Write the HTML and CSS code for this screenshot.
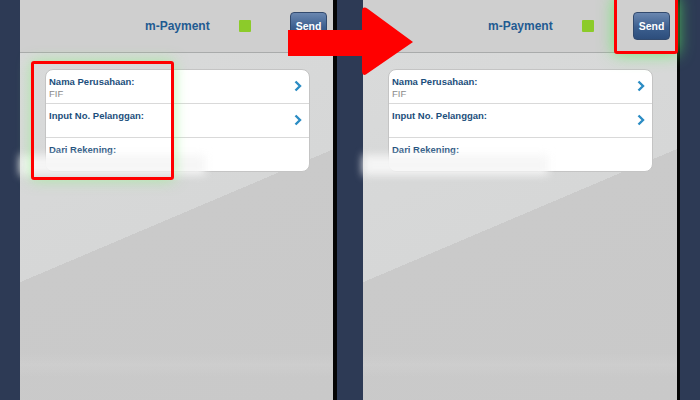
FILE: index.html
```html
<!DOCTYPE html>
<html lang="id">
<head>
    <meta charset="UTF-8">
    <meta name="viewport" content="width=device-width, initial-scale=1.0">
    <title>m-Payment</title>
    <link rel="stylesheet" href="styles.css">
</head>
<body>

    <div class="stage">
        <div class="screen">
            <div class="topbar">
                <span class="title">m-Payment</span>
                <span class="status"></span>
                <button class="send">Send</button>
            </div>
            <div class="content">
                <div class="card">
                    <div class="row">
                        <div class="row-text">
                            <span class="label">Nama Perusahaan:</span>
                            <span class="value">FIF</span>
                        </div>
                        <svg class="chevron" width="8" height="12" viewBox="0 0 8 12"><polyline points="1.5,1.5 6,6 1.5,10.5" fill="none" stroke="#2b8cc4" stroke-width="2.4"/></svg>
                    </div>
                    <div class="row">
                        <div class="row-text">
                            <span class="label">Input No. Pelanggan:</span>
                        </div>
                        <svg class="chevron" width="8" height="12" viewBox="0 0 8 12"><polyline points="1.5,1.5 6,6 1.5,10.5" fill="none" stroke="#2b8cc4" stroke-width="2.4"/></svg>
                    </div>
                    <div class="row row-last">
                        <div class="row-text">
                            <span class="label">Dari Rekening:</span>
                        </div>
                    </div>
                </div>
            </div>
            <div class="smudge"></div>
            <div class="mark mark-list"></div>
        </div>

        <div class="screen screen-right">
            <div class="topbar">
                <span class="title">m-Payment</span>
                <span class="status"></span>
                <button class="send">Send</button>
            </div>
            <div class="content">
                <div class="card">
                    <div class="row">
                        <div class="row-text">
                            <span class="label">Nama Perusahaan:</span>
                            <span class="value">FIF</span>
                        </div>
                        <svg class="chevron" width="8" height="12" viewBox="0 0 8 12"><polyline points="1.5,1.5 6,6 1.5,10.5" fill="none" stroke="#2b8cc4" stroke-width="2.4"/></svg>
                    </div>
                    <div class="row">
                        <div class="row-text">
                            <span class="label">Input No. Pelanggan:</span>
                        </div>
                        <svg class="chevron" width="8" height="12" viewBox="0 0 8 12"><polyline points="1.5,1.5 6,6 1.5,10.5" fill="none" stroke="#2b8cc4" stroke-width="2.4"/></svg>
                    </div>
                    <div class="row row-last">
                        <div class="row-text">
                            <span class="label">Dari Rekening:</span>
                        </div>
                    </div>
                </div>
            </div>
            <div class="smudge"></div>
            <div class="mark mark-send"></div>
        </div>

        <!-- panah penunjuk -->
        <svg class="arrow" width="126" height="80" viewBox="0 0 126 80">
            <path d="M0 30 H74 V12 Q74 5 80 9 L125 42 L80 73 Q74 78 74 70 V56 H0 Z" fill="#ff0000"/>
        </svg>
    </div>

</body>
</html>
```

FILE: styles.css
```css
body {
    margin: 0;
    padding: 0;
    background-color: #2d3a55;
    font-family: "Liberation Sans", Arial, sans-serif;
}

.stage {
    position: relative;
    width: 700px;
    height: 400px;
    display: flex;
    gap: 26px;
    padding-left: 20px;
    box-sizing: border-box;
    overflow: hidden;
}

.screen {
    position: relative;
    width: 313px;
    height: 400px;
    border-right: 4px solid #050505;
    display: flex;
    flex-direction: column;
}

.screen-right {
    width: 314px;
    border-right-width: 3px;
}

.topbar {
    height: 52px;
    background-color: #cfcfcf;
    border-bottom: 1px solid #a9abab;
    display: flex;
    align-items: center;
    padding-left: 125px;
}

.title {
    font-size: 12px;
    font-weight: bold;
    color: #1f5b92;
    width: 65px;
}

.status {
    width: 12px;
    height: 12px;
    background-color: #8ccb2a;
    margin-left: 29px;
    border-radius: 1px;
}

.send {
    margin-left: 39px;
    width: 37px;
    height: 28px;
    padding: 0;
    border: 1px solid #324a6e;
    border-radius: 4px;
    background: linear-gradient(#6a87b0, #3c5f8f 55%, #2d4e7c);
    color: #fff;
    font-family: "Liberation Sans", Arial, sans-serif;
    font-size: 10.5px;
    font-weight: bold;
}

.content {
    flex: 1;
    padding: 16px 0 0 25px;
    background:
        linear-gradient(to bottom, transparent 300px, rgba(255, 255, 255, 0.08) 312px, transparent 324px),
        linear-gradient(157deg, #d9dada 0, #d6d7d7 211px, #cacaca 211px, #c9c9c9 100%);
}

.card {
    width: 265px;
    background-color: #fff;
    border: 1px solid #c4c4c4;
    border-radius: 8px;
    box-sizing: border-box;
}

.row {
    height: 33px;
    border-bottom: 1px solid #d9d9d9;
    display: flex;
    align-items: center;
    justify-content: space-between;
    padding: 0 7px 0 3px;
}

.row-last {
    height: 33px;
    border-bottom: none;
}

.row-text {
    display: flex;
    flex-direction: column;
    align-self: flex-start;
    padding-top: 6px;
}

.label {
    font-size: 9.5px;
    font-weight: bold;
    color: #1c4f7c;
}

.value {
    font-size: 9.5px;
    color: #8a8a8a;
    margin-top: 1px;
}

.chevron {
    margin-top: -1px;
}

.smudge {
    position: absolute;
    left: 0;
    top: 155px;
    width: 185px;
    height: 20px;
    background-color: rgba(246, 246, 246, 0.97);
    filter: blur(4px);
}

.mark {
    position: absolute;
    border: 3px solid #ff0000;
    border-radius: 3px;
    box-sizing: border-box;
}

.mark-list {
    left: 11px;
    top: 61px;
    width: 143px;
    height: 119px;
    box-shadow: 0 0 14px rgba(150, 240, 140, 0.7);
}

.mark-send {
    left: 251px;
    top: -3px;
    width: 64px;
    height: 57px;
    box-shadow: 0 0 16px rgba(90, 240, 90, 0.8);
}

.arrow {
    position: absolute;
    left: 288px;
    top: 0;
}
```
